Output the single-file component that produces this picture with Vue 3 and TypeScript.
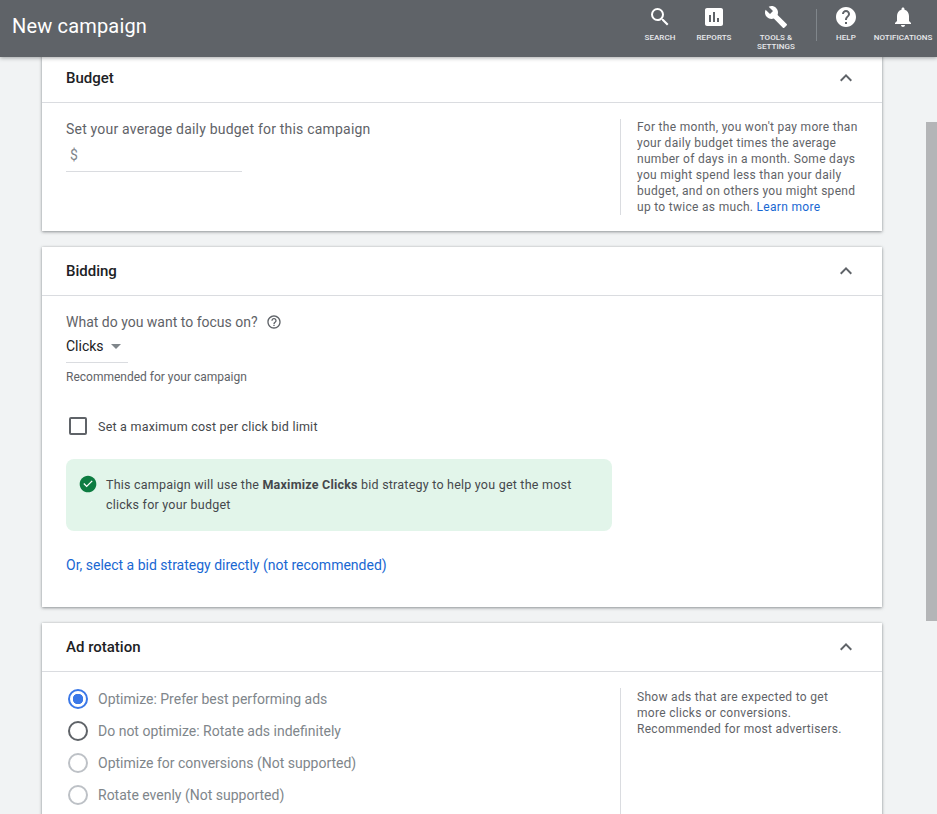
<script setup lang="ts">
interface Tool { label: string[]; icon: string }
const leftTools: Tool[] = [
  { label: ['SEARCH'], icon: 'search' },
  { label: ['REPORTS'], icon: 'reports' },
  { label: ['TOOLS &', 'SETTINGS'], icon: 'tools' },
]
const rightTools: Tool[] = [
  { label: ['HELP'], icon: 'help' },
  { label: ['NOTIFICATIONS'], icon: 'bell' },
]
const radios = [
  { text: 'Optimize: Prefer best performing ads', kind: 'on' },
  { text: 'Do not optimize: Rotate ads indefinitely', kind: 'off' },
  { text: 'Optimize for conversions (Not supported)', kind: 'disabled' },
  { text: 'Rotate evenly (Not supported)', kind: 'disabled' },
]
</script>

<template>
  <div class="page">
    <header class="topbar">
      <h1 class="title">New campaign</h1>
      <nav class="tools">
        <div v-for="t in leftTools" :key="t.icon" class="tool" :class="'tool-' + t.icon">
          <svg class="tool-icon" viewBox="0 0 24 24" width="24" height="24" fill="#fff">
            <path v-if="t.icon === 'search'" d="M15.5 14h-.79l-.28-.27A6.47 6.47 0 0 0 16 9.5 6.5 6.5 0 1 0 9.5 16c1.61 0 3.09-.59 4.23-1.57l.27.28v.79l5 4.99L20.49 19l-4.99-5zm-6 0C7.01 14 5 11.99 5 9.5S7.01 5 9.5 5 14 7.01 14 9.5 11.99 14 9.5 14z" />
            <path v-else-if="t.icon === 'reports'" d="M19 3H5c-1.1 0-2 .9-2 2v14c0 1.1.9 2 2 2h14c1.1 0 2-.9 2-2V5c0-1.1-.9-2-2-2zM9 17H7v-7h2v7zm4 0h-2V7h2v10zm4 0h-2v-4h2v4z" />
            <path v-else d="M22.7 19l-9.1-9.1c.9-2.3.4-5-1.5-6.9-2-2-5-2.4-7.4-1.3L9 6 6 9 1.6 4.7C.4 7.1.9 10.1 2.9 12.1c1.9 1.9 4.6 2.4 6.9 1.5l9.1 9.1c.4.4 1 .4 1.4 0l2.3-2.3c.5-.4.5-1.1.1-1.4z" />
          </svg>
          <span class="tool-label"><span v-for="l in t.label" :key="l" class="tool-line">{{ l }}</span></span>
        </div>
        <div class="tool-divider"></div>
        <div v-for="t in rightTools" :key="t.icon" class="tool" :class="'tool-' + t.icon">
          <svg class="tool-icon" viewBox="0 0 24 24" width="24" height="24" fill="#fff">
            <path v-if="t.icon === 'help'" d="M12 2C6.48 2 2 6.48 2 12s4.48 10 10 10 10-4.48 10-10S17.52 2 12 2zm1 17h-2v-2h2v2zm2.07-7.75l-.9.92C13.45 12.9 13 13.5 13 15h-2v-.5c0-1.1.45-2.1 1.17-2.83l1.24-1.26c.37-.36.59-.86.59-1.41 0-1.1-.9-2-2-2s-2 .9-2 2H8c0-2.21 1.79-4 4-4s4 1.79 4 4c0 .88-.36 1.68-.93 2.25z" />
            <path v-else d="M12 22c1.1 0 2-.9 2-2h-4c0 1.1.9 2 2 2zm6-6v-5c0-3.07-1.63-5.64-4.5-6.32V4c0-.83-.67-1.5-1.5-1.5s-1.5.67-1.5 1.5v.68C7.64 5.36 6 7.92 6 11v5l-2 2v1h16v-1l-2-2z" />
          </svg>
          <span class="tool-label"><span v-for="l in t.label" :key="l" class="tool-line">{{ l }}</span></span>
        </div>
      </nav>
    </header>

    <main class="content">
      <section class="card">
        <div class="card-head">
          <h2>Budget</h2>
          <svg class="chevron" viewBox="0 0 24 24" width="24" height="24" fill="#5f6368"><path d="M12 8l-6 6 1.41 1.41L12 10.83l4.59 4.58L18 14z" /></svg>
        </div>
        <div class="card-body budget-body">
          <div class="main-col">
            <div class="question">Set your average daily budget for this campaign</div>
            <div class="money">$</div>
          </div>
          <aside class="aside budget-aside">
            For the month, you won't pay more than your daily budget times the average number of days in a month. Some days you might spend less than your daily budget, and on others you might spend up to twice as much. <a class="learn">Learn more</a>
          </aside>
        </div>
      </section>

      <section class="card">
        <div class="card-head">
          <h2>Bidding</h2>
          <svg class="chevron" viewBox="0 0 24 24" width="24" height="24" fill="#5f6368"><path d="M12 8l-6 6 1.41 1.41L12 10.83l4.59 4.58L18 14z" /></svg>
        </div>
        <div class="bidding-body">
          <div class="focus">
            What do you want to focus on?
            <svg class="help-icon" viewBox="0 0 24 24" width="16" height="16" fill="#5f6368"><path d="M11 18h2v-2h-2v2zm1-16C6.48 2 2 6.48 2 12s4.48 10 10 10 10-4.48 10-10S17.52 2 12 2zm0 18c-4.41 0-8-3.59-8-8s3.59-8 8-8 8 3.59 8 8-3.59 8-8 8zm0-14c-2.21 0-4 1.79-4 4h2c0-1.1.9-2 2-2s2 .9 2 2c0 2-3 1.75-3 5h2c0-2.25 3-2.5 3-5 0-2.21-1.79-4-4-4z" /></svg>
          </div>
          <div class="select"><span>Clicks</span><i class="caret"></i></div>
          <div class="hint">Recommended for your campaign</div>
          <label class="check-row"><i class="checkbox"></i><span>Set a maximum cost per click bid limit</span></label>
          <div class="notice">
            <svg class="notice-icon" viewBox="0 0 24 24" width="20" height="20"><path fill="#0d7c41" d="M12 2C6.48 2 2 6.48 2 12s4.48 10 10 10 10-4.48 10-10S17.52 2 12 2z" /><path fill="#fff" d="M10 17l-5-5 1.41-1.41L10 14.17l7.59-7.59L19 8l-9 9z" transform="translate(2.4 2.4) scale(.8)" /></svg>
            <p>This campaign will use the <b>Maximize Clicks</b> bid strategy to help you get the most clicks for your budget</p>
          </div>
          <a class="direct">Or, select a bid strategy directly (not recommended)</a>
        </div>
      </section>

      <section class="card last">
        <div class="card-head">
          <h2>Ad rotation</h2>
          <svg class="chevron" viewBox="0 0 24 24" width="24" height="24" fill="#5f6368"><path d="M12 8l-6 6 1.41 1.41L12 10.83l4.59 4.58L18 14z" /></svg>
        </div>
        <div class="card-body rotation-body">
          <div class="main-col radios">
            <div v-for="r in radios" :key="r.text" class="radio-row">
              <i class="radio" :class="r.kind"></i><span>{{ r.text }}</span>
            </div>
          </div>
          <aside class="aside rotation-aside">Show ads that are expected to get more clicks or conversions. Recommended for most advertisers.</aside>
        </div>
      </section>
    </main>

    <div class="scroll-thumb"></div>
  </div>
</template>

<style>
html, body { margin: 0; overflow: hidden; }
</style>

<style scoped>
.page {
  position: relative;
  width: 937px;
  height: 814px;
  overflow: hidden;
  background: #f1f3f4;
  font-family: Roboto, "Liberation Sans", sans-serif;
  color: #5f6368;
}
.topbar {
  position: relative;
  z-index: 2;
  height: 57px;
  box-sizing: border-box;
  display: flex;
  align-items: flex-start;
  justify-content: space-between;
  background: #5f6368;
  box-shadow: 0 1px 4px rgba(60, 64, 67, .45);
}
.title {
  margin: 14px 0 0 12px;
  font-size: 20px;
  line-height: 24px;
  font-weight: 400;
  color: #fff;
  letter-spacing: .17px;
}
.tools { display: flex; align-items: flex-start; }
.tool {
  display: flex;
  flex-direction: column;
  align-items: center;
  padding-top: 5px;
  color: #fff;
}
.tool-search { width: 62px; }
.tool-reports { width: 46px; margin-right: 4px; }
.tool-tools { width: 70px; margin-right: 5px; }
.tool-help { width: 56px; margin-left: 1px; }
.tool-bell { width: 58px; margin-right: 5px; }
.tool-icon { display: block; flex: none; }
.tool-label { margin-top: 4px; display: flex; flex-direction: column; align-items: center; }
.tool-line {
  font-size: 8px;
  line-height: 9px;
  font-weight: 500;
  letter-spacing: .05px;
  white-space: nowrap;
  color: #e8eaed;
}
.tool-divider { width: 1px; height: 32px; margin-top: 9px; background: #80868b; }

.content {
  width: 840px;
  margin: -3px 0 0 42px;
  display: flex;
  flex-direction: column;
  gap: 16px;
}
.card {
  background: #fff;
  box-shadow: 0 1px 3px rgba(60, 64, 67, .5), 0 0 2px rgba(60, 64, 67, .15);
}
.card-head {
  box-sizing: border-box;
  display: flex;
  align-items: center;
  justify-content: space-between;
  padding: 0 24px;
  border-bottom: 1px solid #dadce0;
  height: 49px;
}
.card-head h2 {
  margin: 0;
  font-size: 15px;
  font-weight: 500;
  color: #202124;
}
.card-body { display: flex; }
.main-col { width: 578px; padding-left: 24px; box-sizing: border-box; flex: none; }
.budget-body { height: 128px; }
.question {
  font-size: 14px;
  line-height: 20px;
  letter-spacing: .2px;
  color: #5f6368;
}
.budget-body .question { padding-top: 16px; }
.money {
  width: 176px;
  height: 33px;
  box-sizing: border-box;
  padding: 6px 0 0 4px;
  font-size: 14px;
  line-height: 20px;
  color: #80868b;
  border-bottom: 1px solid #dadce0;
}
.aside {
  border-left: 1px solid #dadce0;
  box-sizing: border-box;
  width: 262px;
  padding-left: 16px;
  padding-right: 23px;
  font-size: 12px;
  line-height: 16px;
  letter-spacing: .3px;
  color: #5f6368;
}
.budget-aside { margin-top: 16px; height: 96px; }
.learn { color: #1967d2; }
.bidding-body { height: 311px; padding: 16px 24px 0; box-sizing: border-box; }
.focus {
  display: flex;
  align-items: center;
  gap: 8px;
  font-size: 14px;
  line-height: 20px;
  color: #5f6368;
}
.help-icon { flex: none; }
.select {
  width: 62px;
  height: 27px;
  margin-top: 4px;
  box-sizing: border-box;
  border-bottom: 1px solid #dadce0;
  display: flex;
  align-items: flex-start;
  font-size: 14px;
  line-height: 20px;
  color: #202124;
}
.caret {
  width: 0;
  height: 0;
  margin: 8px 0 0 7px;
  border-left: 5px solid transparent;
  border-right: 5px solid transparent;
  border-top: 5px solid #80868b;
}
.hint { margin-top: 6px; font-size: 12px; line-height: 16px; color: #5f6368; }
.check-row {
  display: flex;
  align-items: center;
  margin-top: 31px;
  padding-left: 3px;
  height: 20px;
  font-size: 12.5px;
  letter-spacing: .22px;
  color: #45484c;
}
.checkbox {
  width: 18px;
  height: 18px;
  box-sizing: border-box;
  border: 2px solid #5f6368;
  border-radius: 2px;
  margin-right: 11px;
}
.notice {
  display: flex;
  width: 546px;
  height: 72px;
  margin-top: 23px;
  box-sizing: border-box;
  padding: 16px 30px 0 12px;
  background: #e2f5ea;
  border-radius: 8px;
}
.notice-icon { flex: none; margin-right: 8px; margin-top: -1px; }
.notice p {
  margin: 0;
  font-size: 12.5px;
  line-height: 20px;
  letter-spacing: .22px;
  color: #45484c;
}
.notice b { font-weight: 700; }
.direct {
  display: block;
  margin-top: 24px;
  font-size: 14px;
  line-height: 20px;
  color: #1967d2;
}
.last { height: 300px; }
.rotation-body { height: 140px; }
.radios { padding-top: 11px; }
.radio-row {
  display: flex;
  align-items: center;
  height: 32px;
  padding-left: 2px;
  font-size: 14px;
  color: #80868b;
}
.radio {
  width: 20px;
  height: 20px;
  box-sizing: border-box;
  border-radius: 50%;
  margin-right: 10px;
  flex: none;
}
.radio.on { border: 2px solid #3b78e7; background: radial-gradient(circle, #3b78e7 0 5px, #fff 5.5px); }
.radio.off { border: 2px solid #5f6368; }
.radio.disabled { border: 2px solid #bdc1c6; }
.rotation-aside { margin-top: 16px; padding-top: 1px; height: 140px; }
.scroll-thumb {
  position: absolute;
  right: 0;
  top: 122px;
  width: 11px;
  height: 499px;
  background: #b4b5b7;
}
</style>
